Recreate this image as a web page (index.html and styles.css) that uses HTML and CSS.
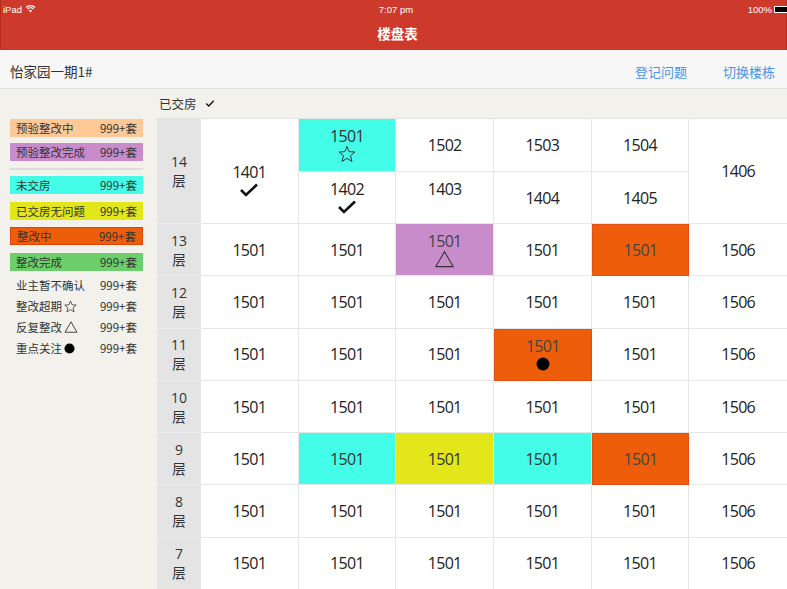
FILE: index.html
```html
<!DOCTYPE html>
<html lang="zh">
<head>
<meta charset="utf-8">
<title>楼盘表</title>
<link rel="stylesheet" href="styles.css">
</head>
<body>
<div class="app">
  <header class="topbar">
    <div class="status">
      <span class="st-left">iPad
        <svg class="wifi" viewBox="0 0 12 9" width="11" height="8"><path d="M6 8.5 L4.2 6.3 A2.8 2.8 0 0 1 7.8 6.3 Z" fill="#fff"/><path d="M2.6 4.6 A4.9 4.9 0 0 1 9.4 4.6" stroke="#fff" stroke-width="1.3" fill="none"/><path d="M0.9 2.8 A7.3 7.3 0 0 1 11.1 2.8" stroke="#fff" stroke-width="1.3" fill="none"/></svg>
      </span>
      <span class="st-time">7:07 pm</span>
      <span class="st-right">100% <span class="battery"></span></span>
    </div>
    <div class="title">楼盘表</div>
  </header>

  <div class="subbar">
    <div class="project">怡家园一期1#</div>
    <nav class="actions"><a class="link">登记问题</a><a class="link">切换楼栋</a></nav>
  </div>

  <div class="main">
    <aside class="legend">
      <div class="tag tag-peach"><span>预验整改中</span><span>999+套</span></div>
      <div class="tag tag-purple"><span>预验整改完成</span><span>999+套</span></div>
      <div class="legend-sep"></div>
      <div class="tag tag-cyan"><span>未交房</span><span>999+套</span></div>
      <div class="tag tag-yellow"><span>已交房无问题</span><span>999+套</span></div>
      <div class="tag tag-orange"><span>整改中</span><span>999+套</span></div>
      <div class="tag tag-green"><span>整改完成</span><span>999+套</span></div>
      <div class="legend-row"><span>业主暂不确认</span><span>999+套</span></div>
      <div class="legend-row"><span>整改超期<svg class="lg-icon" viewBox="0 0 20 20" width="13" height="13"><polygon points="10,1.5 12.4,7.4 18.8,7.8 13.9,11.9 15.5,18.3 10,14.8 4.5,18.3 6.1,11.9 1.2,7.8 7.6,7.4" fill="none" stroke="#333" stroke-width="1.2"/></svg></span><span>999+套</span></div>
      <div class="legend-row"><span>反复整改<svg class="lg-icon" viewBox="0 0 18 16" width="14" height="12"><polygon points="9,1.2 17,15 1,15" fill="none" stroke="#333" stroke-width="1.2"/></svg></span><span>999+套</span></div>
      <div class="legend-row"><span>重点关注<svg class="lg-icon" viewBox="0 0 12 12" width="11" height="11"><circle cx="6" cy="6" r="5.5" fill="#000"/></svg></span><span>999+套</span></div>
    </aside>

    <section class="board">
      <div class="board-head">已交房 <svg class="head-check" viewBox="0 0 12 10" width="10" height="9"><path d="M1.5 5 L4.5 8 L10.5 1.8" stroke="#111" stroke-width="1.6" fill="none"/></svg></div>
      <div class="grid">
        <div class="floor span2"><span>14</span><span>层</span></div>
        <div class="cell span2 lowered"><span class="num">1401</span><svg class="ico" viewBox="0 0 20 15" width="20" height="15"><path d="M2 7.5 L7 12.5 L18 2" stroke="#111" stroke-width="2.6" fill="none"/></svg></div>
        <div class="cell c-cyan"><span class="num">1501</span><svg class="ico" viewBox="0 0 20 20" width="18" height="18"><polygon points="10,1.5 12.4,7.4 18.8,7.8 13.9,11.9 15.5,18.3 10,14.8 4.5,18.3 6.1,11.9 1.2,7.8 7.6,7.4" fill="none" stroke="#333" stroke-width="1.1"/></svg></div>
        <div class="cell"><span class="num">1502</span></div>
        <div class="cell"><span class="num">1503</span></div>
        <div class="cell"><span class="num">1504</span></div>
        <div class="cell span2 c-last"><span class="num">1406</span></div>
        <div class="cell r2"><span class="num">1402</span><svg class="ico" viewBox="0 0 20 15" width="20" height="15"><path d="M2 7.5 L7 12.5 L18 2" stroke="#111" stroke-width="2.6" fill="none"/></svg></div>
        <div class="cell r2"><span class="num">1403</span><span class="ico-blank"></span></div>
        <div class="cell r2"><span class="num">1404</span></div>
        <div class="cell r2"><span class="num">1405</span></div>

        <div class="floor"><span>13</span><span>层</span></div>
        <div class="cell"><span class="num">1501</span></div>
        <div class="cell"><span class="num">1501</span></div>
        <div class="cell c-purple"><span class="num">1501</span><svg class="ico" viewBox="0 0 18 16" width="19" height="17"><polygon points="9,1 17.2,15.2 0.8,15.2" fill="none" stroke="#333" stroke-width="1"/></svg></div>
        <div class="cell"><span class="num">1501</span></div>
        <div class="cell c-orange"><span class="num">1501</span></div>
        <div class="cell c-last"><span class="num">1506</span></div>

        <div class="floor"><span>12</span><span>层</span></div>
        <div class="cell"><span class="num">1501</span></div>
        <div class="cell"><span class="num">1501</span></div>
        <div class="cell"><span class="num">1501</span></div>
        <div class="cell"><span class="num">1501</span></div>
        <div class="cell"><span class="num">1501</span></div>
        <div class="cell c-last"><span class="num">1506</span></div>

        <div class="floor"><span>11</span><span>层</span></div>
        <div class="cell"><span class="num">1501</span></div>
        <div class="cell"><span class="num">1501</span></div>
        <div class="cell"><span class="num">1501</span></div>
        <div class="cell c-orange"><span class="num">1501</span><svg class="ico" viewBox="0 0 14 14" width="14" height="14"><circle cx="7" cy="7" r="6.5" fill="#000"/></svg></div>
        <div class="cell"><span class="num">1501</span></div>
        <div class="cell c-last"><span class="num">1506</span></div>

        <div class="floor"><span>10</span><span>层</span></div>
        <div class="cell"><span class="num">1501</span></div>
        <div class="cell"><span class="num">1501</span></div>
        <div class="cell"><span class="num">1501</span></div>
        <div class="cell"><span class="num">1501</span></div>
        <div class="cell"><span class="num">1501</span></div>
        <div class="cell c-last"><span class="num">1506</span></div>

        <div class="floor"><span>9</span><span>层</span></div>
        <div class="cell"><span class="num">1501</span></div>
        <div class="cell c-cyan"><span class="num">1501</span></div>
        <div class="cell c-yellow"><span class="num">1501</span></div>
        <div class="cell c-cyan"><span class="num">1501</span></div>
        <div class="cell c-orange"><span class="num">1501</span></div>
        <div class="cell c-last"><span class="num">1506</span></div>

        <div class="floor"><span>8</span><span>层</span></div>
        <div class="cell"><span class="num">1501</span></div>
        <div class="cell"><span class="num">1501</span></div>
        <div class="cell"><span class="num">1501</span></div>
        <div class="cell"><span class="num">1501</span></div>
        <div class="cell"><span class="num">1501</span></div>
        <div class="cell c-last"><span class="num">1506</span></div>

        <div class="floor"><span>7</span><span>层</span></div>
        <div class="cell"><span class="num">1501</span></div>
        <div class="cell"><span class="num">1501</span></div>
        <div class="cell"><span class="num">1501</span></div>
        <div class="cell"><span class="num">1501</span></div>
        <div class="cell"><span class="num">1501</span></div>
        <div class="cell c-last"><span class="num">1506</span></div>
      </div>
    </section>
  </div>
</div>
</body>
</html>
```

FILE: styles.css
```css
html, body {
  margin: 0;
  padding: 0;
}
body {
  width: 787px;
  height: 589px;
  overflow: hidden;
  background: #f2f1ec;
  font-family: "Noto Sans CJK SC", "Noto Sans", sans-serif;
  color: #333;
}
.app {
  width: 787px;
  height: 589px;
  overflow: hidden;
}

/* top red bar */
.topbar {
  height: 50px;
  background: #cd3a2b;
  color: #fff;
  box-sizing: border-box;
  border-left: 1px solid #b52d1f;
  border-right: 1px solid #b52d1f;
}
.status {
  height: 18px;
  display: grid;
  grid-template-columns: 1fr auto 1fr;
  align-items: center;
  font-family: "Liberation Sans", Arial, sans-serif;
  font-size: 9.5px;
  padding-left: 2px;
}
.st-left {
  display: flex;
  align-items: center;
  gap: 3px;
}
.st-time {
  padding-left: 3px;
}
.st-right {
  justify-self: end;
  display: flex;
  align-items: center;
  gap: 2px;
  margin-right: -4px;
}
.battery {
  display: inline-block;
  width: 16px;
  height: 7px;
  background: #000;
  border: 1px solid #fff;
  box-sizing: border-box;
}
.title {
  height: 32px;
  line-height: 30px;
  text-align: center;
  font-weight: bold;
  font-size: 13.5px;
  padding-left: 8px;
}

/* sub header */
.subbar {
  height: 39px;
  box-sizing: border-box;
  background: #f7f7f7;
  border-bottom: 1px solid #dedede;
  display: flex;
  align-items: center;
  justify-content: space-between;
  padding: 4px 12px 0 10px;
}
.project {
  font-size: 13.5px;
  color: #333;
}
.actions {
  display: flex;
  gap: 36px;
}
.link {
  font-size: 13px;
  color: #4c92ea;
}

/* main */
.main {
  display: flex;
}
.legend {
  width: 157px;
  flex: none;
  box-sizing: border-box;
  padding: 30px 0 0 10px;
  font-size: 11.5px;
  color: #333;
}
.tag,
.legend-row {
  width: 133px;
  box-sizing: border-box;
  display: flex;
  justify-content: space-between;
  align-items: center;
  padding: 0 6px;
}
.tag {
  height: 18px;
  margin-bottom: 6px;
}
.tag-peach { background: #fec996; }
.tag-purple { background: #c98ccb; margin-bottom: 7px; }
.legend-sep {
  width: 133px;
  height: 2px;
  background: #dcdcdc;
  margin-bottom: 6px;
}
.tag-cyan { background: #43fde8; margin-bottom: 7.5px; }
.tag-yellow { background: #e3e619; margin-bottom: 7.5px; }
.tag-orange { background: #ee5e0a; border: 1px solid #e0460c; margin-bottom: 7.5px; }
.tag-green { background: #6ccf6c; margin-bottom: 4px; }
.legend-row {
  height: 21px;
}
.legend-row span:first-child {
  display: flex;
  align-items: center;
  gap: 2px;
}
.lg-icon {
  display: block;
}

/* board */
.board {
  width: 630px;
  flex: none;
}
.board-head {
  height: 29px;
  display: flex;
  align-items: center;
  gap: 8px;
  padding-left: 2px;
  font-size: 12.5px;
  color: #333;
}
.grid {
  display: grid;
  grid-template-columns: 44px repeat(6, 1fr);
  grid-template-rows: 53px 52px repeat(8, 52.3px);
  background: #fff;
  border-top: 1px solid #e2e2e2;
}
.floor {
  background: #e4e4e4;
  border-bottom: 1px solid #ececec;
  display: flex;
  flex-direction: column;
  align-items: center;
  justify-content: center;
  font-family: "Open Sans", "Noto Sans CJK SC", sans-serif;
  font-size: 14px;
  line-height: 18px;
  color: #333;
}
.floor span:last-child {
  font-family: "Noto Sans CJK SC", sans-serif;
  font-size: 13.5px;
}
.span2 {
  grid-row: span 2;
}
.cell {
  box-sizing: border-box;
  border-right: 1px solid #e6e6e6;
  border-bottom: 1px solid #e6e6e6;
  display: flex;
  flex-direction: column;
  align-items: center;
  justify-content: center;
  font-family: "Open Sans", sans-serif;
  font-size: 16px;
  letter-spacing: -0.7px;
  color: #222;
}
.cell.lowered {
  padding-top: 20px;
}
.c-last {
  border-right: none;
}
.num {
  line-height: 18px;
}
.ico,
.ico-blank {
  display: block;
  height: 18px;
  margin-top: 0;
}
.ico-blank {
  width: 18px;
}
.c-cyan { background: #43fde8; color: #333; }
.c-purple { background: #c98ccb; color: #444; }
.c-yellow { background: #e3e619; color: #333; }
.c-orange { background: #ee5e0a; color: #444; border: 1px solid #e54d12; }
```
